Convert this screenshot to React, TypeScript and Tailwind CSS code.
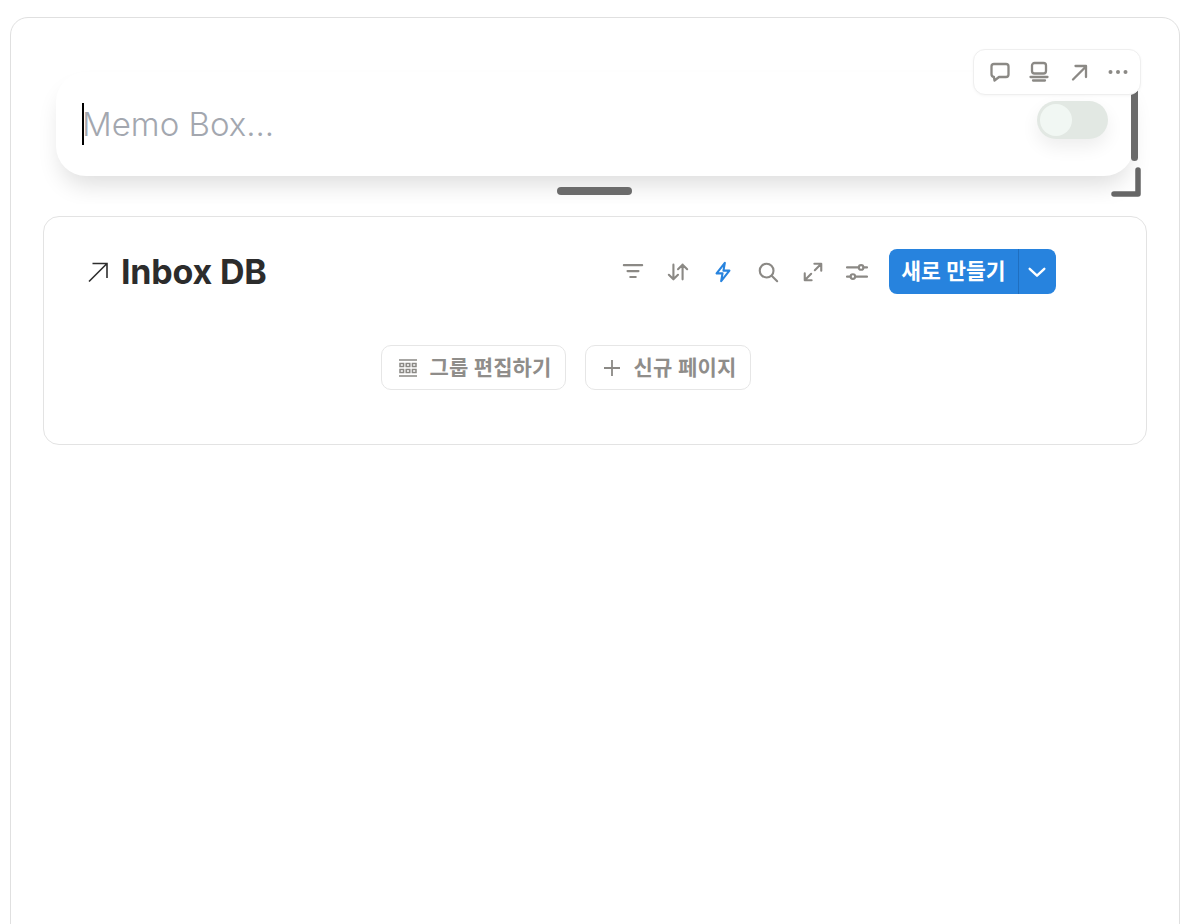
const ink = "#8b8985";

function Icon({ children, className }: { children: React.ReactNode; className?: string }) {
  return (
    <svg
      viewBox="0 0 24 24"
      fill="none"
      stroke="currentColor"
      strokeWidth="2.3"
      strokeLinecap="round"
      strokeLinejoin="round"
      className={className}
    >
      {children}
    </svg>
  );
}

function MemoBox() {
  return (
    <div className="relative h-[186px] overflow-hidden">
      {/* shadow gets cut off at the bottom of this wrapper */}
      <div className="absolute left-[45px] top-[54px] flex h-[104px] w-[1078px] items-start justify-between rounded-[30px] bg-white px-[26px] pt-[30px] shadow-[0_14px_24px_-6px_rgba(0,0,0,0.14)]">
        <div className="flex items-center">
          <span className="h-[42px] w-[2px] bg-black" />
          <span className="-ml-[2px] text-[33px] font-light leading-[44px] text-[#a3a7af]">Memo Box...</span>
        </div>
        <div className="-mt-[1px] flex h-[38px] w-[71px] items-center rounded-full bg-[#e2e8e3] p-[3px] shadow-[0_8px_18px_rgba(0,0,0,0.07)]">
          <span className="h-[32px] w-[32px] rounded-full bg-[#f1f7f3]" />
        </div>
      </div>
      <div className="absolute left-[546px] top-[169px] h-[8px] w-[75px] rounded-full bg-[#6b6b6b]" />
      <div className="absolute left-[1120px] top-[70px] h-[73px] w-[7px] rounded-b-full bg-[#6b6b6b]" />
      <svg viewBox="0 0 30 30" fill="none" className="absolute left-[1100px] top-[149px] h-[30px] w-[30px]">
        <path d="M3 27H27V3" stroke="#666666" strokeWidth="5.5" strokeLinecap="round" strokeLinejoin="round" />
      </svg>
    </div>
  );
}

function Toolbar() {
  return (
    <div className="absolute left-[962px] top-[31px] flex h-[46px] w-[168px] items-center justify-between rounded-[12px] border border-[#efefef] bg-white pl-[14px] pr-[10px] text-[#8b8985] shadow-[0_1px_3px_rgba(0,0,0,0.04)]">
      <Icon className="h-[24px] w-[24px]">
        <path d="M3.5 6.5A2.5 2.5 0 0 1 6 4h12a2.5 2.5 0 0 1 2.5 2.5v8A2.5 2.5 0 0 1 18 17h-7l-4.5 3.5-.6-3.6A2.8 2.8 0 0 1 3.5 14z" />
      </Icon>
      <Icon className="h-[24px] w-[24px]">
        <rect x="5" y="3" width="14" height="10.5" rx="2.5" />
        <path d="M3.5 17h17M6 20.5h12" />
      </Icon>
      <Icon className="h-[24px] w-[24px]">
        <path d="M6 19.5 18.5 7M8.5 6H19v11" />
      </Icon>
      <svg viewBox="0 0 24 24" className="h-[24px] w-[24px]" fill="currentColor">
        <circle cx="4.5" cy="12" r="2" />
        <circle cx="12" cy="12" r="2" />
        <circle cx="19.5" cy="12" r="2" />
      </svg>
    </div>
  );
}

function DbActions() {
  return (
    <div className="flex items-center gap-[23px] text-[#8b8985]">
      <Icon className="h-[22px] w-[22px]">
        <path d="M2 4.5h20M6 11h12M9 17.5h6" />
      </Icon>
      <Icon className="h-[22px] w-[22px]">
        <path d="M7 4v16M2 15l5 5 5-5M17 20V4M12 9l5-5 5 5" />
      </Icon>
      <Icon className="h-[22px] w-[22px] text-[#2783de]">
        <path d="M14 2 5 13.5h6.5L10 22l9-11.5h-6.5z" />
      </Icon>
      <Icon className="h-[22px] w-[22px]">
        <circle cx="10.5" cy="10.5" r="7.5" />
        <path d="m16 16 6 6" />
      </Icon>
      <Icon className="h-[22px] w-[22px]">
        <path d="m14 10 7-7M13.5 3H21v7.5M3 21l7-7M3 13.5V21h7.5" />
      </Icon>
      <Icon className="-ml-[1px] h-[22px] w-[22px]">
        <path d="M1 7h13M19 7h4M1 17h4M10 17h13" />
        <circle cx="16.5" cy="7" r="2.5" />
        <circle cx="7.5" cy="17" r="2.5" />
      </Icon>
    </div>
  );
}

function InboxDb() {
  return (
    <div className="mx-[32px] mt-[12px] h-[229px] rounded-[16px] border border-[#e3e3e3] bg-white">
      <div className="flex items-center justify-between pl-[43px] pr-[90px] pt-[32px]">
        <div className="flex items-center gap-[12px]">
          <svg viewBox="0 0 22 22" fill="none" stroke="#2d2d2d" strokeWidth="1.6" className="h-[22px] w-[22px]">
            <path d="M2 20.5 20 2.5M5.5 2.5H20V17" />
          </svg>
          <span className="text-[34px] font-bold leading-[44px] tracking-[-0.2px] text-[#2c2c2c]">Inbox DB</span>
        </div>
        <div className="flex items-center gap-[21px]">
          <DbActions />
          <div className="flex h-[45px] w-[167px] items-center rounded-[8px] bg-[#2783de] text-white">
            <span className="flex h-full w-[130px] items-center justify-center border-r border-[#1f6fc0] text-[21.5px] font-semibold">
              새로 만들기
            </span>
            <svg viewBox="0 0 24 24" fill="none" stroke="white" strokeWidth="2.6" strokeLinecap="round" strokeLinejoin="round" className="ml-[7px] h-[22px] w-[22px]">
              <path d="m4 8.5 8 7.5 8-7.5" />
            </svg>
          </div>
        </div>
      </div>
      <div className="mt-[51px] flex justify-center gap-[19px] pr-[59px]">
        <button className="flex h-[45px] w-[185px] items-center gap-[13px] rounded-[10px] border border-[#e6e6e6] pl-[17px] text-[21px] font-semibold tracking-[0.1px] text-[#8f8d8a]">
          <svg viewBox="0 0 18 18" fill="none" stroke={ink} strokeWidth="1.5" className="h-[18px] w-[18px]">
            <path d="M0 1h18M0 17h18" />
            <rect x="1" y="4.5" width="3.6" height="3" />
            <rect x="7.2" y="4.5" width="3.6" height="3" />
            <rect x="13.4" y="4.5" width="3.6" height="3" />
            <rect x="1" y="10.5" width="3.6" height="3" />
            <rect x="7.2" y="10.5" width="3.6" height="3" />
            <rect x="13.4" y="10.5" width="3.6" height="3" />
          </svg>
          그룹 편집하기
        </button>
        <button className="flex h-[45px] w-[166px] items-center gap-[13px] rounded-[10px] border border-[#e6e6e6] pl-[17px] text-[21px] font-semibold tracking-[0.2px] text-[#8f8d8a]">
          <svg viewBox="0 0 18 18" fill="none" stroke={ink} strokeWidth="1.8" className="h-[18px] w-[18px]">
            <path d="M9 1v16M1 9h16" />
          </svg>
          신규 페이지
        </button>
      </div>
    </div>
  );
}

export default function App() {
  return (
    <div className="h-[924px] overflow-hidden bg-white pl-[10px] pr-[12px] pt-[17px] font-['Inter','Noto_Sans_CJK_KR',sans-serif]">
      <div className="relative h-[1000px] rounded-[18px] border border-[#e0e0e0] bg-white">
        <MemoBox />
        <Toolbar />
        <InboxDb />
      </div>
    </div>
  );
}
